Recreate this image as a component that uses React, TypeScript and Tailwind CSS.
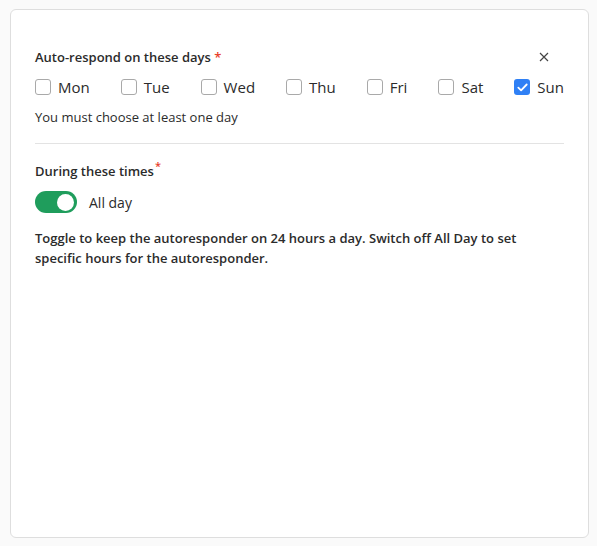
import React from "react";

const days = ["Mon", "Tue", "Wed", "Thu", "Fri", "Sat", "Sun"];

function Check({ checked }: { checked: boolean }) {
  return checked ? (
    <span className="flex h-[16px] w-[16px] items-center justify-center rounded-[3px] bg-[#2f80f5]">
      <svg width="11" height="9" viewBox="0 0 11 9" fill="none">
        <path d="M1.3 4.6 L4.1 7.3 L9.7 1.5" stroke="white" strokeWidth="1.8" strokeLinecap="round" strokeLinejoin="round" />
      </svg>
    </span>
  ) : (
    <span className="h-[16px] w-[16px] rounded-[3px] border border-[#a9a9a9] bg-white" />
  );
}

export default function App() {
  return (
    <div className="min-h-[546px] bg-[#fafafa] pl-[10px] pr-[8px] pt-[9px] pb-[8px]" style={{ fontFamily: "'Open Sans', 'Noto Sans', sans-serif" }}>
      <div className="h-[529px] rounded-[6px] border border-[#dedede] bg-white px-[24px] pt-[38px] text-[#2b2b2b]">
        <div className="flex items-center justify-between">
          <div className="text-[13px] font-semibold leading-[18px]">
            Auto-respond on these days <span className="text-[#e8412c]">*</span>
          </div>
          <button className="mr-[14px] flex h-[12px] w-[12px] items-center justify-center">
            <svg width="10" height="10" viewBox="0 0 10 10">
              <path d="M1 1 L9 9 M9 1 L1 9" stroke="#444" strokeWidth="1.2" />
            </svg>
          </button>
        </div>
        <div className="mt-[10px] flex items-center justify-between">
          {days.map((d) => (
            <label key={d} className="flex items-center gap-[7px] text-[15px] leading-[22px]">
              <Check checked={d === "Sun"} />
              <span>{d}</span>
            </label>
          ))}
        </div>
        <div className="mt-[10px] text-[13px] leading-[18px]">You must choose at least one day</div>
        <div className="mt-[17px] h-px bg-[#e3e3e3]" />
        <div className="mt-[18px] flex text-[13px] font-semibold leading-[18px]">
          During these times<span className="ml-[1px] -mt-[5px] text-[11px] text-[#e8412c]">*</span>
        </div>
        <div className="mt-[11px] flex items-center gap-[12px]">
          <span className="flex h-[22px] w-[42px] items-center justify-end rounded-full bg-[#1f9d5c] pr-[3px]">
            <span className="h-[17px] w-[17px] rounded-full bg-white" />
          </span>
          <span className="text-[14px]">All day</span>
        </div>
        <p className="mt-[15px] pr-[30px] text-[13px] font-semibold leading-[20px]">
          Toggle to keep the autoresponder on 24 hours a day. Switch off All Day to set specific hours for the autoresponder.
        </p>
      </div>
    </div>
  );
}
